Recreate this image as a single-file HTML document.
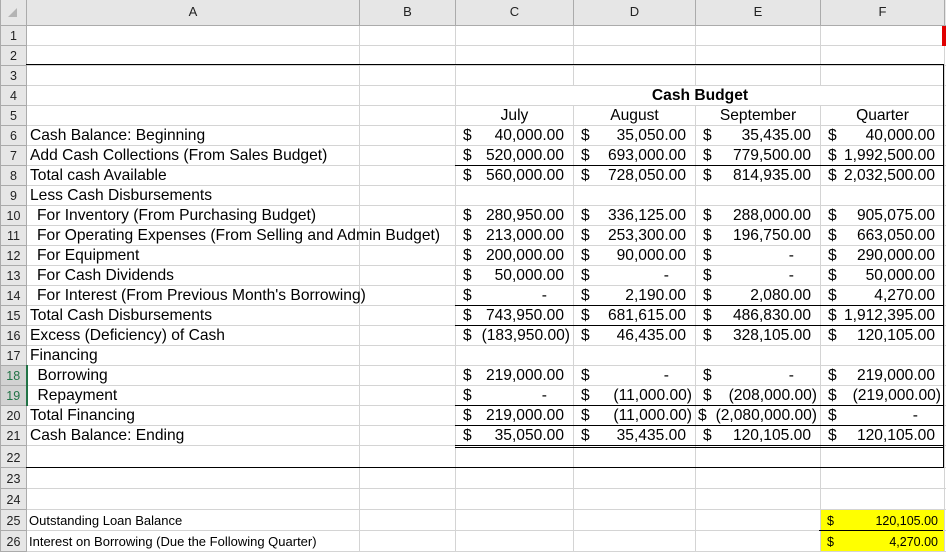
<!DOCTYPE html>
<html><head><meta charset="utf-8"><style>
*{margin:0;padding:0;box-sizing:border-box}
body{width:946px;height:551px;overflow:hidden;background:#fff;font-family:"Liberation Sans",Arial,sans-serif;position:relative}
table{border-collapse:collapse;table-layout:fixed;position:absolute;left:0;top:0;width:946px}
td{border:1px solid #d4d4d4;font-size:15.6px;color:#000;white-space:nowrap;overflow:visible;vertical-align:bottom;line-height:18px;padding:0;position:relative}
tr.h td{background:#e6e6e6;border-color:#ababab;border-top:none;font-size:13px;text-align:center;vertical-align:middle;color:#222;height:25px;border-bottom:1px solid #ababab}
td.rh{background:#e6e6e6;border-color:#ababab;font-size:12.5px;text-align:center;color:#222;line-height:17px}
td.rh.sel{background:#d2d2d2;border-right:2px solid #217346;color:#217346}
tr{height:20px}
tr.t td{height:21px}
.l{padding-left:3px}
.i{padding-left:10px}
.m{display:flex;justify-content:space-between;padding:0 9px 0 7px}
.m.n{padding-right:3px}
.m.d{padding-right:26px}
.c{text-align:center}
.s{font-size:13px;padding-left:2px}
.y{background:#ffff00;font-size:12.5px}
.y .m{padding:0 6px 0 6px}
.bl{position:absolute;background:#000}
</style></head><body>
<table>
<colgroup><col style="width:26px"><col style="width:333px"><col style="width:96px"><col style="width:118px"><col style="width:122px"><col style="width:125px"><col style="width:124px"><col style="width:2px"></colgroup>
<tr class="h"><td style="font-size:0">◢</td><td>A</td><td>B</td><td>C</td><td>D</td><td>E</td><td>F</td><td></td></tr>
<tr><td class="rh">1</td><td></td><td></td><td></td><td></td><td></td><td></td><td></td></tr>
<tr><td class="rh">2</td><td></td><td></td><td></td><td></td><td></td><td></td><td></td></tr>
<tr><td class="rh">3</td><td></td><td></td><td></td><td></td><td></td><td></td><td></td></tr>
<tr><td class="rh">4</td><td></td><td></td><td colspan="4" class="c" style="font-weight:bold">Cash Budget</td><td></td></tr>
<tr><td class="rh">5</td><td></td><td></td><td class="c">July</td><td class="c">August</td><td class="c">September</td><td class="c">Quarter</td><td></td></tr>
<tr><td class="rh">6</td><td class="l">Cash Balance: Beginning</td><td></td><td><div class="m"><span>$</span><span>40,000.00</span></div></td><td><div class="m"><span>$</span><span>35,050.00</span></div></td><td><div class="m"><span>$</span><span>35,435.00</span></div></td><td><div class="m"><span>$</span><span>40,000.00</span></div></td><td></td></tr>
<tr><td class="rh">7</td><td class="l">Add Cash Collections (From Sales Budget)</td><td></td><td><div class="m"><span>$</span><span>520,000.00</span></div></td><td><div class="m"><span>$</span><span>693,000.00</span></div></td><td><div class="m"><span>$</span><span>779,500.00</span></div></td><td><div class="m"><span>$</span><span>1,992,500.00</span></div></td><td></td></tr>
<tr><td class="rh">8</td><td class="l">Total cash Available</td><td></td><td><div class="m"><span>$</span><span>560,000.00</span></div></td><td><div class="m"><span>$</span><span>728,050.00</span></div></td><td><div class="m"><span>$</span><span>814,935.00</span></div></td><td><div class="m"><span>$</span><span>2,032,500.00</span></div></td><td></td></tr>
<tr><td class="rh">9</td><td class="l">Less Cash Disbursements</td><td></td><td></td><td></td><td></td><td></td><td></td></tr>
<tr><td class="rh">10</td><td class="i">For Inventory (From Purchasing Budget)</td><td></td><td><div class="m"><span>$</span><span>280,950.00</span></div></td><td><div class="m"><span>$</span><span>336,125.00</span></div></td><td><div class="m"><span>$</span><span>288,000.00</span></div></td><td><div class="m"><span>$</span><span>905,075.00</span></div></td><td></td></tr>
<tr><td class="rh">11</td><td class="i">For Operating Expenses (From Selling and Admin Budget)</td><td></td><td><div class="m"><span>$</span><span>213,000.00</span></div></td><td><div class="m"><span>$</span><span>253,300.00</span></div></td><td><div class="m"><span>$</span><span>196,750.00</span></div></td><td><div class="m"><span>$</span><span>663,050.00</span></div></td><td></td></tr>
<tr><td class="rh">12</td><td class="i">For Equipment</td><td></td><td><div class="m"><span>$</span><span>200,000.00</span></div></td><td><div class="m"><span>$</span><span>90,000.00</span></div></td><td><div class="m d"><span>$</span><span>-</span></div></td><td><div class="m"><span>$</span><span>290,000.00</span></div></td><td></td></tr>
<tr><td class="rh">13</td><td class="i">For Cash Dividends</td><td></td><td><div class="m"><span>$</span><span>50,000.00</span></div></td><td><div class="m d"><span>$</span><span>-</span></div></td><td><div class="m d"><span>$</span><span>-</span></div></td><td><div class="m"><span>$</span><span>50,000.00</span></div></td><td></td></tr>
<tr><td class="rh">14</td><td class="i">For Interest (From Previous Month's Borrowing)</td><td></td><td><div class="m d"><span>$</span><span>-</span></div></td><td><div class="m"><span>$</span><span>2,190.00</span></div></td><td><div class="m"><span>$</span><span>2,080.00</span></div></td><td><div class="m"><span>$</span><span>4,270.00</span></div></td><td></td></tr>
<tr><td class="rh">15</td><td class="l">Total Cash Disbursements</td><td></td><td><div class="m"><span>$</span><span>743,950.00</span></div></td><td><div class="m"><span>$</span><span>681,615.00</span></div></td><td><div class="m"><span>$</span><span>486,830.00</span></div></td><td><div class="m"><span>$</span><span>1,912,395.00</span></div></td><td></td></tr>
<tr><td class="rh">16</td><td class="l">Excess (Deficiency) of Cash</td><td></td><td><div class="m n"><span>$</span><span>(183,950.00)</span></div></td><td><div class="m"><span>$</span><span>46,435.00</span></div></td><td><div class="m"><span>$</span><span>328,105.00</span></div></td><td><div class="m"><span>$</span><span>120,105.00</span></div></td><td></td></tr>
<tr><td class="rh">17</td><td class="l">Financing</td><td></td><td></td><td></td><td></td><td></td><td></td></tr>
<tr><td class="rh sel">18</td><td class="i">Borrowing</td><td></td><td><div class="m"><span>$</span><span>219,000.00</span></div></td><td><div class="m d"><span>$</span><span>-</span></div></td><td><div class="m d"><span>$</span><span>-</span></div></td><td><div class="m"><span>$</span><span>219,000.00</span></div></td><td></td></tr>
<tr><td class="rh sel">19</td><td class="i">Repayment</td><td></td><td><div class="m d"><span>$</span><span>-</span></div></td><td><div class="m n"><span>$</span><span>(11,000.00)</span></div></td><td><div class="m n"><span>$</span><span>(208,000.00)</span></div></td><td><div class="m n"><span>$</span><span>(219,000.00)</span></div></td><td></td></tr>
<tr><td class="rh">20</td><td class="l">Total Financing</td><td></td><td><div class="m"><span>$</span><span>219,000.00</span></div></td><td><div class="m n"><span>$</span><span>(11,000.00)</span></div></td><td><div class="m n" style="padding-left:2px"><span>$</span><span>(2,080,000.00)</span></div></td><td><div class="m d"><span>$</span><span>-</span></div></td><td></td></tr>
<tr><td class="rh">21</td><td class="l">Cash Balance: Ending</td><td></td><td><div class="m"><span>$</span><span>35,050.00</span></div></td><td><div class="m"><span>$</span><span>35,435.00</span></div></td><td><div class="m"><span>$</span><span>120,105.00</span></div></td><td><div class="m"><span>$</span><span>120,105.00</span></div></td><td></td></tr>
<tr style="height:22px"><td class="rh">22</td><td></td><td></td><td></td><td></td><td></td><td></td><td></td></tr>
<tr class="t"><td class="rh">23</td><td></td><td></td><td></td><td></td><td></td><td></td><td></td></tr>
<tr class="t"><td class="rh">24</td><td></td><td></td><td></td><td></td><td></td><td></td><td></td></tr>
<tr class="t"><td class="rh">25</td><td class="s">Outstanding Loan Balance</td><td></td><td></td><td></td><td></td><td class="y"><div class="m"><span>$</span><span>120,105.00</span></div></td><td></td></tr>
<tr class="t"><td class="rh">26</td><td class="s">Interest on Borrowing (Due the Following Quarter)</td><td></td><td></td><td></td><td></td><td class="y"><div class="m"><span>$</span><span>4,270.00</span></div></td><td></td></tr>
</table>
<div class="bl" style="left:26px;top:64px;width:918px;height:1px"></div>
<div class="bl" style="left:943px;top:64px;width:1px;height:404px"></div>
<div class="bl" style="left:26px;top:467px;width:918px;height:1px"></div>
<div class="bl" style="left:455px;top:165px;width:488px;height:1px"></div>
<div class="bl" style="left:455px;top:305px;width:488px;height:1px"></div>
<div class="bl" style="left:455px;top:325px;width:488px;height:1px"></div>
<div class="bl" style="left:455px;top:405px;width:488px;height:1px"></div>
<div class="bl" style="left:455px;top:425px;width:488px;height:1px"></div>
<div class="bl" style="left:455px;top:445px;width:488px;height:1px"></div>
<div class="bl" style="left:455px;top:447px;width:488px;height:1px"></div>
<div class="bl" style="left:819px;top:530px;width:124px;height:1px"></div>
<div style="position:absolute;left:942px;top:26px;width:4px;height:20px;background:#e00000"></div>
<div style="position:absolute;left:8px;top:8px;width:0;height:0;border-left:9px solid transparent;border-bottom:9px solid #b4b4b4"></div>
</body></html>
